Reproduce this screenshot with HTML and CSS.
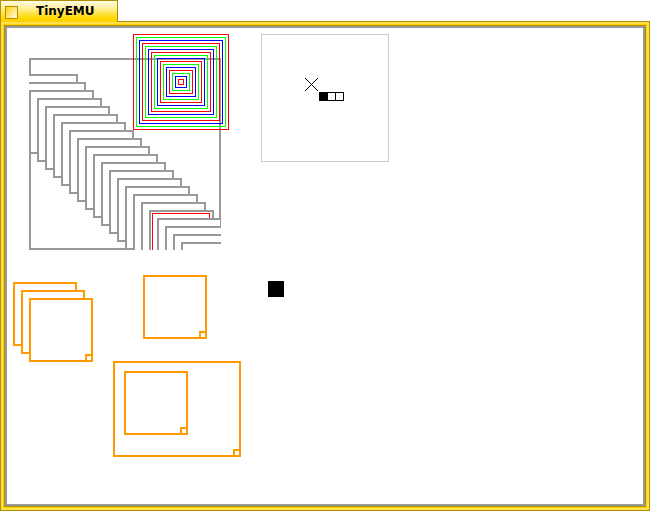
FILE: index.html
```html
<!DOCTYPE html>
<html>
<head>
<meta charset="utf-8">
<link rel="stylesheet" href="styles.css">
</head>
<body>
<div class="window">
  <div class="tab">
    <span class="tab-box"></span>
    <span class="tab-title">TinyEMU</span>
  </div>
  <div class="frame">
    <div class="frame-inner">
      <div class="canvas">
        <svg class="scene" width="636" height="476" viewBox="7 28 636 476" shape-rendering="crispEdges">
          <defs>
            <clipPath id="stackClip"><rect x="29" y="58" width="192" height="192"/></clipPath>
          </defs>
          <g class="gray">
            <rect x="30" y="59" width="190" height="190"/>
            <g id="stack" clip-path="url(#stackClip)"></g>
          </g>
          <g id="spiral" fill="none" stroke-width="1"></g>
          <rect class="lightbox" x="261.5" y="34.5" width="127" height="127"/>
          <line class="thin" x1="305" y1="78" x2="318" y2="91"/>
          <line class="thin" x1="318" y1="78" x2="305" y2="91"/>
          <rect class="cell on" x="319.5" y="92.5" width="8" height="8"/>
          <rect class="cell" x="327.5" y="92.5" width="8" height="8"/>
          <rect class="cell" x="335.5" y="92.5" width="8" height="8"/>
          <rect x="268" y="281" width="16" height="16" fill="#000"/>
          <g class="orange">
            <rect x="14" y="283" width="62" height="62"/>
            <rect x="22" y="291" width="62" height="62"/>
            <rect x="30" y="299" width="62" height="62"/>
            <rect x="86" y="355" width="6" height="6"/>
            <rect x="144" y="276" width="62" height="62"/>
            <rect x="200" y="332" width="6" height="6"/>
            <rect x="114" y="362" width="126" height="94"/>
            <rect x="234" y="450" width="6" height="6"/>
            <rect x="125" y="372" width="62" height="62"/>
            <rect x="181" y="428" width="6" height="6"/>
          </g>
        </svg>
      </div>
    </div>
  </div>
</div>
<script src="app.js"></script>
</body>
</html>
```

FILE: app.js
```js
(function () {
  var NS = "http://www.w3.org/2000/svg";
  var stack = document.getElementById("stack");
  for (var t = 74; t <= 242; t += 8) {
    var l = t - 61;
    var r = document.createElementNS(NS, "rect");
    r.setAttribute("x", l + 1);
    r.setAttribute("y", t + 1);
    r.setAttribute("width", 63);
    r.setAttribute("height", 62);
    stack.appendChild(r);
    if (t === 210) {
      var red = document.createElementNS(NS, "rect");
      red.setAttribute("x", l + 3.5);
      red.setAttribute("y", t + 3.5);
      red.setAttribute("width", 57);
      red.setAttribute("height", 57);
      red.setAttribute("class", "redline");
      stack.appendChild(red);
    }
  }
  var spiral = document.getElementById("spiral");
  var colors = ["#ff0000", "#00ff00", "#0000ff"];
  for (var i = 0; i < 16; i++) {
    var s = document.createElementNS(NS, "rect");
    s.setAttribute("x", 133.5 + 3 * i);
    s.setAttribute("y", 34.5 + 3 * i);
    s.setAttribute("width", 95 - 6 * i);
    s.setAttribute("height", 95 - 6 * i);
    s.setAttribute("stroke", colors[i % 3]);
    spiral.appendChild(s);
  }
})();
```

FILE: styles.css
```css
html, body {
  margin: 0;
  padding: 0;
  background: #ffffff;
}

.window {
  width: 650px;
  height: 511px;
  display: flex;
  flex-direction: column;
  align-items: flex-start;
}

.tab {
  position: relative;
  z-index: 1;
  box-sizing: border-box;
  width: 118px;
  height: 22px;
  margin-bottom: -1px;
  border: 1px solid #b09000;
  border-bottom: none;
  background: linear-gradient(to bottom, #fffbe2 0%, #ffef9a 35%, #ffd800 80%, #ffd000 100%);
  display: flex;
  align-items: center;
  padding-left: 4px;
}

.tab-box {
  box-sizing: border-box;
  width: 13px;
  height: 13px;
  margin-top: 1px;
  border: 1px solid #b09000;
  background: linear-gradient(135deg, #ffd200 0%, #ffe88a 55%, #fffbe8 100%);
}

.tab-title {
  margin-left: 18px;
  font-family: "DejaVu Sans", sans-serif;
  font-weight: bold;
  font-size: 12px;
  line-height: 21px;
  color: #000;
}

.frame {
  box-sizing: border-box;
  width: 650px;
  flex: 1;
  border: 1px solid #b09000;
  padding: 3px;
  background: #ffd200;
  box-shadow: inset 0 0 0 2px #ffe04a;
  display: flex;
}

.frame-inner {
  flex: 1;
  border: 1px solid #b09000;
  display: flex;
}

.canvas {
  flex: 1;
  border: 2px solid #999999;
  background: #ffffff;
  overflow: hidden;
}

.scene {
  display: block;
}

.gray rect {
  fill: #ffffff;
  stroke: #999999;
  stroke-width: 2;
}

.gray rect.redline {
  fill: none;
  stroke: #ff0000;
  stroke-width: 1;
}

.lightbox {
  fill: none;
  stroke: #cccccc;
  stroke-width: 1;
}

.thin {
  stroke: #000;
  stroke-width: 1;
}

.cell {
  fill: #ffffff;
  stroke: #000;
  stroke-width: 1;
}

.cell.on {
  fill: #000;
}

.orange rect {
  fill: #ffffff;
  stroke: #ff9900;
  stroke-width: 2;
}
```
